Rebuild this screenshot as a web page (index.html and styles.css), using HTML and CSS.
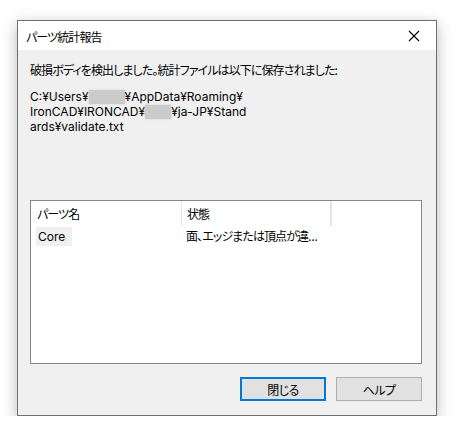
FILE: index.html
```html
<!DOCTYPE html>
<html lang="ja">
<head>
    <meta charset="UTF-8">
    <meta name="viewport" content="width=device-width, initial-scale=1.0">
    <title>パーツ統計報告</title>
    <link rel="stylesheet" href="styles.css">
</head>
<body>
    <div class="dialog">
        <div class="title-bar">
            <span class="title">パーツ統計報告</span>
            <button class="close-btn" title="閉じる">
                <svg width="12" height="12" viewBox="0 0 12 12">
                    <path d="M1 1 L11 11 M11 1 L1 11" stroke="#000" stroke-width="1.1" fill="none"/>
                </svg>
            </button>
        </div>

        <div class="content">
            <p class="message">破損ボディを検出しました。統計ファイルは以下に保存されました:</p>

            <p class="path">
                C:¥Users¥<span class="masked wide"></span>¥AppData¥Roaming¥<br>
                IronCAD¥IRONCAD¥<span class="masked"></span>¥ja-JP¥Stand<br>
                ards¥validate.txt
            </p>

            <div class="list">
                <div class="list-header">
                    <div class="col col-name">パーツ名</div>
                    <div class="col col-state">状態</div>
                    <div class="col col-rest"></div>
                </div>
                <div class="list-row">
                    <div class="col col-name"><span class="selected">Core</span></div>
                    <div class="col col-state jp">面、エッジまたは頂点が違…</div>
                </div>
            </div>

            <div class="buttons">
                <button class="btn default">閉じる</button>
                <button class="btn">ヘルプ</button>
            </div>
        </div>
    </div>
</body>
</html>
```

FILE: styles.css
```css
body {
    margin: 0;
    background-color: #ffffff;
    font-family: "Noto Sans", "Noto Sans CJK JP", sans-serif;
    font-size: 12px;
    font-feature-settings: "palt";
    color: #000;
}

.dialog {
    margin: 20px 0 0 17px;
    width: 418px;
    height: 394px;
    border: 1px solid #6f6f6f;
    background-color: #f0f0f0;
    box-shadow: 0 4px 14px rgba(0,0,0,0.28);
    display: flex;
    flex-direction: column;
}

.title-bar {
    height: 29px;
    background-color: #fff;
    display: flex;
    align-items: center;
    justify-content: space-between;
    padding-left: 8px;
}

.title {
    font-family: "Noto Sans CJK JP", sans-serif;
    font-size: 12px;
    letter-spacing: -0.9px;
    padding-top: 1px;
}

.close-btn {
    width: 46px;
    height: 29px;
    border: none;
    background: none;
    display: flex;
    align-items: center;
    justify-content: center;
    padding: 0;
    margin-right: -1px;
}

.content {
    flex: 1;
    display: flex;
    flex-direction: column;
    padding: 12px 14px 0 12px;
}

.message {
    margin: 0;
    line-height: 15px;
    font-family: "Noto Sans CJK JP", sans-serif;
    letter-spacing: -0.9px;
}

/* Inter keeps the line boxes inside the 15px rows */
.path {
    margin: 12px 0 0 0;
    line-height: 15px;
    font-family: Inter, "Noto Sans CJK JP", sans-serif;
}

.masked {
    display: inline-block;
    width: 26px;
    height: 14px;
    vertical-align: -3px;
    background-color: #cbcbcb;
    box-shadow: 0 0 2px #cbcbcb;
}

.masked.wide {
    width: 36px;
}

.list {
    margin-top: 66px;
    height: 162px;
    border: 1px solid #828790;
    background-color: #fff;
}

.list-header,
.list-row {
    display: flex;
    height: 25px;
    align-items: stretch;
}

.list-row {
    height: 20px;
}

.col {
    display: flex;
    align-items: center;
    padding-left: 6px;
    font-family: "Noto Sans", "Noto Sans CJK JP", sans-serif;
}

.list-header .col {
    border-right: 1px solid #e5e5e5;
    letter-spacing: -0.9px;
}

.jp {
    letter-spacing: -0.9px;
}

.col-name {
    width: 144px;
}

.col-state {
    width: 143px;
    padding-left: 5px;
}

.col-rest {
    width: 0;
    padding-left: 0;
}

.list-row .col-name {
    padding-left: 5px;
}

.list-row .col-state {
    padding-left: 6px;
}

.selected {
    background-color: #f0f0f0;
    padding: 2px 7px 2px 2px;
    line-height: 15px;
    font-family: Inter, sans-serif;
}

.buttons {
    display: flex;
    justify-content: flex-end;
    gap: 10px;
    margin-top: 13px;
}

.btn {
    width: 86px;
    height: 24px;
    border: 1px solid #adadad;
    background-color: #e1e1e1;
    font-family: "Noto Sans CJK JP", sans-serif;
    font-feature-settings: "palt";
    font-size: 12px;
    letter-spacing: -0.6px;
    padding: 0;
    margin: 0;
}

.btn.default {
    border: 2px solid #0078d7;
}
```
